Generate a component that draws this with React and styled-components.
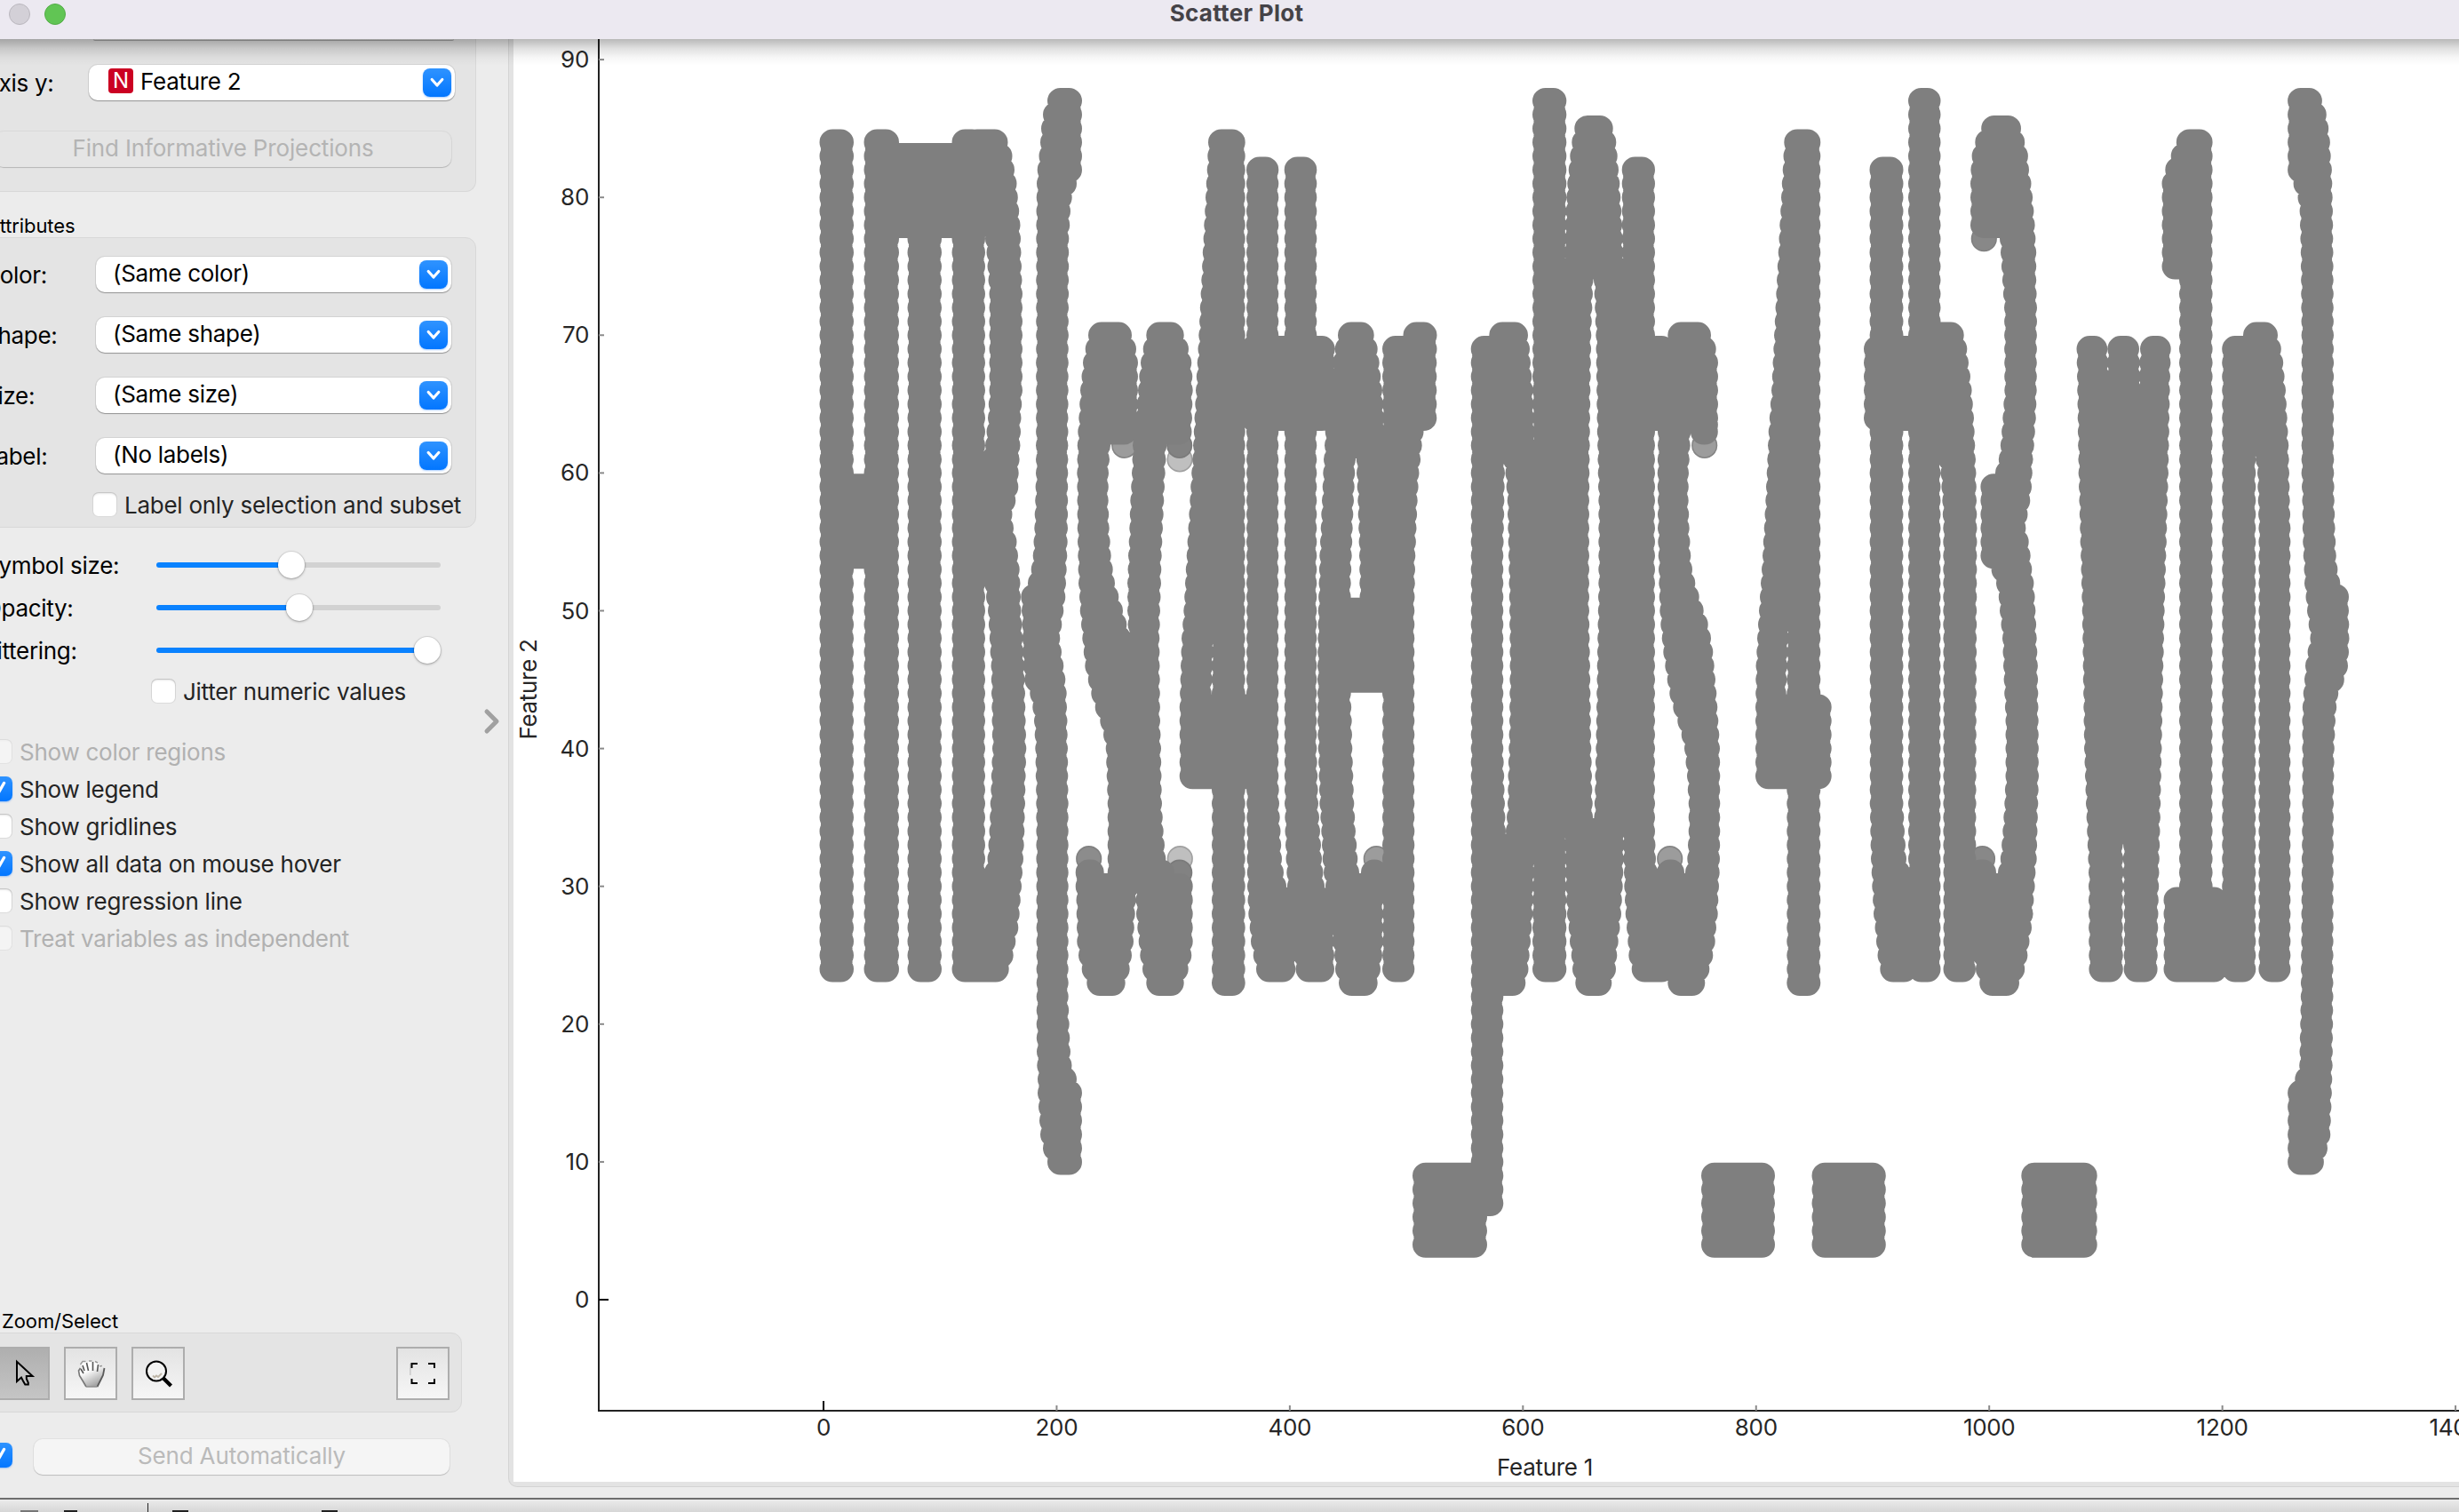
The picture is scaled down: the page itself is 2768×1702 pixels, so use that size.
import React from "react";
import styled, { createGlobalStyle, css } from "styled-components";

const GlobalStyle = createGlobalStyle`
  * { box-sizing: border-box; }
  html, body { margin: 0; padding: 0; overflow: hidden; }
  body { background: #ececec; }
`;

const Window = styled.div`
  width: 2768px;
  height: 1702px;
  display: flex;
  flex-direction: column;
  overflow: hidden;
  background: #ececec;
  font-family: Inter, "Liberation Sans", sans-serif;
  font-size: 26px;
  line-height: 32px;
  letter-spacing: -0.3px;
  color: #000;
  white-space: nowrap;
`;

const TitleBar = styled.header`
  position: relative;
  z-index: 2;
  flex: none;
  height: 44px;
  padding: 0 0 12px 10px;
  display: grid;
  grid-template-columns: 80px 1fr 74px;
  align-items: center;
  background: #ece9f1;
  &::after {
    content: "";
    position: absolute;
    left: 0;
    right: 0;
    top: 44px;
    height: 30px;
    background: linear-gradient(rgba(0, 0, 0, 0.28), rgba(0, 0, 0, 0.12) 35%, rgba(0, 0, 0, 0.03) 70%, rgba(0, 0, 0, 0));
    pointer-events: none;
  }
`;

const Lights = styled.div`
  display: flex;
  gap: 16px;
`;

const Light = styled.span`
  width: 24px;
  height: 24px;
  border-radius: 50%;
  background: ${(p) => p.$fill};
  border: 1px solid ${(p) => p.$edge};
`;

const Title = styled.h1`
  margin: -2px 0 0;
  font-size: 26px;
  font-weight: 700;
  letter-spacing: 0.3px;
  text-align: center;
  color: #454348;
`;

const Body = styled.main`
  flex: none;
  height: 1642px;
  display: flex;
`;

const Sidebar = styled.aside`
  width: 536px;
  flex: none;
  padding-bottom: 26px;
  display: flex;
  flex-direction: column;
`;

const Group = styled.section`
  width: ${(p) => p.$width}px;
  height: ${(p) => p.$height}px;
  flex: none;
  margin-left: -40px;
  padding: ${(p) => p.$pad};
  display: flex;
  flex-direction: column;
  gap: ${(p) => p.$gap || 0}px;
  background: #e4e4e4;
  border: 1px solid #d8d8d8;
  border-radius: ${(p) => (p.$openTop ? "0 0 12px 12px" : "12px")};
  ${(p) => p.$openTop && css`border-top: 0;`}
`;

const Heading = styled.h2`
  margin: ${(p) => p.$margin};
  padding-top: 1px;
  height: 28px;
  font-size: 22px;
  line-height: 28px;
  font-weight: 400;
  letter-spacing: -0.1px;
`;

const Row = styled.div`
  display: flex;
  align-items: center;
  height: 40px;
  flex: none;
  margin-top: ${(p) => p.$top || 0}px;
`;

const Label = styled.span`
  width: ${(p) => p.$width}px;
  flex: none;
  padding-top: 1px;
`;

const Combo = styled.div`
  width: ${(p) => p.$width}px;
  height: 40px;
  flex: none;
  display: flex;
  align-items: center;
  padding: 0 4px 0 ${(p) => p.$indent}px;
  background: #fff;
  border-radius: 10px;
  box-shadow: 0 0 0 1px rgba(0, 0, 0, 0.07), 0 1px 1px rgba(0, 0, 0, 0.3);
`;

const ComboText = styled.span`
  flex: 1;
  margin-top: -2px;
`;

const ComboArrow = styled.span`
  width: 32px;
  height: 32px;
  display: grid;
  place-items: center;
  border-radius: 8px;
  background: linear-gradient(#2f93ff, #0276ff);
  box-shadow: 0 1px 2px rgba(0, 110, 255, 0.35);
`;

const ComboPeek = styled.div`
  width: 406px;
  height: 2px;
  margin-left: 124px;
  flex: none;
  background: #dcdcdc;
  border-bottom: 1px solid #a8a8a8;
  border-radius: 0 0 8px 8px;
`;

const NumericBadge = styled.span`
  width: 28px;
  height: 28px;
  margin: -5px 8px 0 0;
  border-radius: 4px;
  background: #cb0022;
  color: #fff;
  font-size: 24px;
  line-height: 28px;
  letter-spacing: 0;
  text-align: center;
`;

const PushButton = styled.button`
  width: ${(p) => p.$width}px;
  height: 40px;
  flex: none;
  margin: ${(p) => p.$margin || 0};
  padding: 0 0 2px;
  border: 0;
  border-radius: 10px;
  font: inherit;
  letter-spacing: -0.15px;
  color: ${(p) => p.$color};
  background: ${(p) => p.$bg};
  box-shadow: 0 0 0 1px rgba(0, 0, 0, 0.045), 0 1px 1px rgba(0, 0, 0, 0.16);
`;

const Check = styled.label`
  height: ${(p) => p.$height || 28}px;
  flex: none;
  display: flex;
  align-items: center;
  gap: 8px;
  margin: ${(p) => p.$margin || 0};
  color: ${(p) => (p.$disabled ? "#b1b1b1" : "#242424")};
  letter-spacing: -0.26px;
`;

const CheckText = styled.span`
  padding-top: 2px;
`;

const Box = styled.span`
  width: 28px;
  height: 28px;
  flex: none;
  display: grid;
  place-items: center;
  border-radius: 7px;
  background: ${(p) => (p.$checked ? "linear-gradient(#2f93ff, #0276ff)" : p.$disabled ? "#f4f4f4" : "#fff")};
  box-shadow: ${(p) =>
    p.$checked
      ? "0 1px 2px rgba(0, 110, 255, 0.35)"
      : `inset 0 0 0 1px rgba(0, 0, 0, ${p.$disabled ? 0.07 : 0.14}), inset 0 2px 2px rgba(0, 0, 0, ${p.$disabled ? 0.03 : 0.1})`};
`;

const Sliders = styled.div`
  margin: 18px 0 8px -18px;
`;

const SliderRow = styled.div`
  height: 48px;
  display: flex;
  align-items: center;
`;

const Track = styled.div`
  width: 320px;
  height: 6px;
  display: flex;
  align-items: center;
  border-radius: 3px;
  background: linear-gradient(to right, #0a82ff ${(p) => p.$value}px, #d2d2d2 ${(p) => p.$value}px);
`;

const Thumb = styled.span`
  width: 30px;
  height: 30px;
  flex: none;
  margin-left: ${(p) => p.$value - 15}px;
  border-radius: 50%;
  background: #fff;
  box-shadow: 0 0 0 1px rgba(0, 0, 0, 0.07), 0 1px 3px rgba(0, 0, 0, 0.3);
`;

const Options = styled.div`
  display: flex;
  flex-direction: column;
  margin: 33px 0 auto -14px;
`;

const Tools = styled.div`
  display: flex;
  gap: 16px;
`;

const ToolButton = styled.button`
  width: 60px;
  height: 60px;
  padding: 0;
  display: grid;
  place-items: center;
  border: 2px solid #adadad;
  background: ${(p) => (p.$active ? "linear-gradient(#afafaf, #c5c5c5)" : "linear-gradient(#e3e3e3, #f6f6f6)")};
  ${(p) => p.$last && css`margin-left: auto;`}
`;

const Handle = styled.div`
  width: 36px;
  flex: none;
  padding: 753px 0 0 7px;
`;

const PlotFrame = styled.section`
  flex: 1;
  height: 1630px;
  padding: 0 0 5px 5px;
  background: #e3e3e3;
  border: 1px solid #d4d4d4;
  border-width: 0 0 1px 1px;
  border-bottom-left-radius: 10px;
`;

const Plot = styled.svg`
  display: block;
  background: #fff;
`;

const AxisText = styled.text`
  font-size: 26px;
  letter-spacing: -0.3px;
  fill: #262626;
  text-anchor: ${(p) => p.$anchor || "middle"};
`;

const StatusBar = styled.footer`
  flex: 1;
  display: flex;
  align-items: flex-end;
  border-top: 2px solid #6e6e6e;
  background: linear-gradient(#ebebeb, #d6d6d6);
`;

const Mark = styled.span`
  width: ${(p) => p.$width}px;
  height: ${(p) => p.$height || 2}px;
  margin-left: ${(p) => p.$gap}px;
  background: ${(p) => p.$color || "#222"};
`;

/* Scatter data: every stroke is a list of [row, left, right] stops.
   Rows between two stops are interpolated. */
const ROW = 15.51;
const rowY = (row) => 1463 - row * ROW;
const R = 14.7;

const bar = (top, bottom, left, right) => [[top, left, right], [bottom, left, right]];

const STROKES = [
  // H
  bar(84, 24, 922.5, 961), bar(84, 24, 972.5, 1012), bar(59, 54, 936, 1000),
  // T
  bar(83, 78, 990, 1090), bar(80, 24, 1021.5, 1060),
  // B
  bar(84, 24, 1071.5, 1109),
  [[84, 1085, 1134.5], [83, 1085, 1139.5], [82, 1085, 1142], [81, 1085, 1144.5], [80, 1085, 1145.8], [78, 1100, 1148.5], [77, 1109, 1149], [76, 1110.5, 1149.5], [73, 1113.5, 1151], [66, 1113.5, 1151], [64, 1112, 1149.5], [62, 1109, 1148.5], [60, 1100, 1146.7], [59, 1090, 1146.3], [58, 1090, 1143.3], [57, 1090, 1139.5], [56, 1090, 1141], [55, 1090, 1144.5], [54, 1090, 1146], [53, 1100, 1147.7], [52, 1108, 1148.5], [50, 1112, 1149.5], [46, 1115.5, 1153.3], [40, 1117, 1155.3], [34, 1113.5, 1153.3], [32, 1111.5, 1152], [31, 1108, 1151], [30, 1100, 1150], [28, 1100, 1147.7], [27, 1100, 1146.3], [26, 1100, 1143.3], [25, 1100, 1140.7], [24, 1085, 1135.7]],
  // {
  [[87, 1179, 1218], [86, 1174, 1218], [85, 1172, 1218], [84, 1171, 1218], [83, 1169.5, 1218], [82, 1167.7, 1218], [81, 1167, 1212], [80, 1166.7, 1206.7], [79, 1166.5, 1205], [77, 1166.3, 1203.3], [60, 1166, 1202.3], [56, 1164.3, 1202], [54, 1162.7, 1201.3], [53, 1160.7, 1200.7], [52, 1157, 1200], [51, 1149.3, 1199.3], [50, 1150, 1197.3], [49, 1150.5, 1195.3], [48, 1150.7, 1193.3], [47, 1151, 1195], [46, 1151.7, 1197.3], [45, 1153.3, 1199.3], [44, 1159.3, 1200.7], [43, 1162.3, 1201], [42, 1164, 1201.5], [40, 1165.3, 1202], [36, 1166.3, 1202.7], [22, 1166.7, 1202.7], [20, 1166.7, 1203.7], [18, 1167, 1205], [17, 1167.3, 1206.5], [16, 1168, 1212], [15, 1168, 1218], [12, 1171, 1218], [11, 1174, 1218], [10, 1179, 1218]],
  // s
  [[70, 1225, 1274], [69, 1221.7, 1279], [68, 1219, 1281], [66, 1216, 1281], [64, 1214.3, 1281], [63, 1213.3, 1280]],
  [[63, 1213.3, 1250], [62, 1212.7, 1250], [61, 1212.5, 1249], [60, 1212.3, 1248], [58, 1212.5, 1247.7], [56, 1212.7, 1248.7], [54, 1213.3, 1250.7], [53, 1213.6, 1252.7], [52, 1214, 1255], [51, 1215, 1259.3], [50, 1215.7, 1264], [49, 1217, 1268.3], [48, 1218.3, 1273], [46, 1221.3, 1278], [44, 1228.3, 1281], [43, 1232.7, 1281.7], [42, 1238.3, 1282], [41, 1242, 1282], [40, 1244.7, 1282], [36, 1246.7, 1282], [30, 1246.7, 1282]],
  bar(31, 30, 1210.7, 1242.7),
  [[30, 1211.3, 1280], [28, 1211.7, 1277.7], [26, 1212.3, 1276], [25, 1214, 1274], [24, 1217.7, 1271.7], [23, 1223.3, 1266.7]],
  // s
  [[70, 1290.3, 1332.7], [69, 1286.7, 1338], [68, 1284, 1341.3], [67, 1282.3, 1342.3], [66, 1281, 1342.7], [64, 1278, 1342], [63, 1276, 1341.5]],
  [[63, 1276, 1314], [62, 1275, 1313.3], [60, 1274, 1311.7], [58, 1272.3, 1310.3], [56, 1271.3, 1309], [54, 1270, 1307.7], [52, 1269, 1307], [50, 1269, 1306], [48, 1270, 1305.3], [42, 1270, 1306], [40, 1272, 1307], [36, 1275, 1308], [34, 1276, 1309.7], [32, 1277, 1312.3], [31, 1278, 1322], [30, 1278, 1322]],
  [[30, 1278, 1342.7], [28, 1279, 1342.7], [26, 1281.7, 1342.7], [25, 1283.3, 1341.3], [24, 1286, 1337.7], [23, 1290.3, 1332.7]],
  // 4
  bar(84, 23, 1364, 1401.7),
  [[84, 1360, 1401.7], [82, 1358.7, 1400], [78, 1355.3, 1400], [74, 1352.3, 1400], [70, 1349.3, 1400], [66, 1346, 1400], [62, 1343, 1395], [58, 1339.3, 1385], [54, 1335.7, 1374], [50, 1332.3, 1369], [48, 1330, 1367], [46, 1329, 1365.5], [43, 1327.7, 1363]],
  bar(43, 38, 1327.7, 1425),
  // t
  [[82, 1403, 1439.3], [38, 1403, 1439.3], [36, 1403.2, 1440], [34, 1403.4, 1441.5], [32, 1403.6, 1443], [31, 1403.8, 1445], [30, 1404, 1448], [29, 1404.5, 1460], [28, 1405.3, 1460], [27, 1406.7, 1460], [26, 1408, 1460], [25, 1410.7, 1459], [24, 1414, 1458.3]],
  bar(69, 64, 1396, 1502.7),
  // t
  [[82, 1445.7, 1482.3], [40, 1445.7, 1482.3], [36, 1446, 1484], [34, 1446.5, 1486], [32, 1447.5, 1488], [30, 1449, 1491], [29, 1449, 1501], [25, 1456, 1502], [24, 1458.5, 1502]],
  // e
  [[70, 1506, 1546.7], [69, 1502.7, 1550.7], [68, 1500, 1552.7], [67, 1498, 1554.3], [66, 1496, 1556], [64, 1492.3, 1558.3], [62, 1491, 1560]],
  [[62, 1491, 1528], [61, 1490, 1526], [60, 1489.3, 1525.3], [58, 1488, 1524], [56, 1486.7, 1522.7], [54, 1485.3, 1521.7], [52, 1484.5, 1520.7], [50, 1483.7, 1520.5], [46, 1483, 1520.5], [44, 1483, 1520.7], [42, 1483, 1521.7], [40, 1483.7, 1522.3], [38, 1484.5, 1523.3], [36, 1485.3, 1524.3], [34, 1487.3, 1526], [32, 1488.7, 1528.3], [31, 1490, 1530], [30, 1492, 1532]],
  bar(31, 30, 1532, 1562),
  [[30, 1492, 1558], [29, 1493, 1557], [26, 1500, 1557], [25, 1502, 1556], [24, 1503, 1554], [23, 1507, 1550.7]],
  [[62, 1526.5, 1575], [60, 1527, 1575], [58, 1528.3, 1575], [54, 1530, 1575], [50, 1530.7, 1575]],
  bar(50, 45, 1500, 1575),
  // r
  bar(70, 69, 1579.5, 1617.5), bar(69, 64, 1556, 1617.3),
  [[64, 1556, 1603], [63, 1556, 1602.5], [62, 1556, 1600.7], [60, 1556, 1597.5], [58, 1556, 1595.7], [56, 1556, 1594.5], [54, 1556, 1593.3], [50, 1556, 1592.3], [24, 1556, 1592.3]],
  // underscores
  bar(9, 4, 1590, 1674), bar(9, 4, 1915, 1998), bar(9, 4, 2039.5, 2122.8), bar(9, 4, 2275.3, 2360.7),
  // p
  [[69, 1655.7, 1692.3], [60, 1655.7, 1694], [54, 1655.7, 1692.3], [40, 1655.7, 1692.3], [36, 1655.7, 1694], [34, 1655.7, 1695], [24, 1655.7, 1692.3], [7, 1655.7, 1692.3]],
  [[70, 1676.3, 1720], [69, 1670, 1722], [68, 1670, 1723], [67, 1670, 1724.3], [66, 1670, 1725.7], [64, 1670, 1727], [62, 1685, 1728], [61, 1692, 1730], [60, 1694.5, 1730], [58, 1696.7, 1730], [54, 1698, 1730], [50, 1699, 1730], [46, 1699.5, 1730], [42, 1699, 1730], [38, 1697.5, 1730], [36, 1697, 1730], [34, 1695, 1730], [33, 1688, 1730], [32, 1680, 1728], [30, 1680, 1726.7], [28, 1680, 1725.3], [27, 1680, 1724.3], [26, 1680, 1723], [25, 1680, 1721.7], [24, 1680, 1720.5], [23, 1680, 1717.3]],
  // l
  bar(87, 24, 1725, 1763.3),
  // 0
  [[85, 1772.3, 1815.7], [84, 1769.3, 1819.3], [83, 1767.3, 1820.7], [82, 1765.7, 1822], [81, 1764.3, 1823.3], [80, 1763.3, 1824.3], [78, 1761.7, 1826], [76, 1760.7, 1827.3], [75, 1760, 1828]],
  [[75, 1759, 1794], [74, 1758, 1793.5], [70, 1756, 1791.3], [64, 1755, 1790], [58, 1755, 1789], [50, 1755, 1789], [46, 1755, 1790], [40, 1756, 1791.3], [34, 1760, 1793.5]],
  [[75, 1794, 1830], [74, 1794, 1830], [70, 1796.3, 1832], [64, 1797.5, 1832], [58, 1799.3, 1832], [52, 1799.3, 1832], [46, 1797.7, 1832], [40, 1796.3, 1830], [34, 1794, 1829]],
  [[34, 1760, 1829], [31, 1761.7, 1827.3], [30, 1762, 1826.7], [28, 1764, 1825], [27, 1765.7, 1823.5], [26, 1767, 1821.7], [25, 1768.7, 1820.3], [24, 1770, 1819], [23, 1773.3, 1814.3]],
  // t
  [[82, 1825.7, 1863], [34, 1826, 1863], [32, 1827.3, 1864], [31, 1828, 1866], [30, 1828.3, 1880], [28, 1829.7, 1885], [27, 1831, 1885], [26, 1832.3, 1885], [25, 1833.3, 1885], [24, 1836.7, 1885]],
  bar(69, 64, 1850, 1885),
  // s
  [[70, 1877.3, 1926], [69, 1872, 1931.7], [68, 1870, 1934], [64, 1870, 1934]],
  bar(64, 63, 1903, 1933.8),
  [[64, 1867, 1904], [63, 1866, 1903.3], [62, 1866, 1902.7], [60, 1865.7, 1901], [58, 1866, 1900.7], [56, 1866, 1901.7], [54, 1866.7, 1903.3], [53, 1867, 1905], [52, 1867.3, 1908.3], [51, 1867.7, 1912.7], [50, 1868.3, 1917.7], [49, 1869.3, 1922.7], [48, 1870.7, 1926], [47, 1872.3, 1928.3], [46, 1874.3, 1929.7], [45, 1876.7, 1931], [44, 1879.3, 1932.3], [43, 1883.3, 1933.3], [42, 1888.3, 1934.3], [41, 1892.7, 1935.3], [40, 1896, 1936], [38, 1899, 1936.3], [36, 1900.7, 1936.3], [34, 1900.7, 1936.3], [32, 1899.3, 1936], [31, 1897, 1935.7], [30, 1890, 1935]],
  bar(31, 30, 1865, 1896),
  [[30, 1880, 1935], [28, 1870, 1933.7], [27, 1870, 1932], [26, 1870, 1930.7], [25, 1870, 1928.3], [24, 1870, 1924.3], [23, 1877.3, 1919.3]],
  // 4
  bar(84, 23, 2011.3, 2049.3),
  [[84, 2008.3, 2045], [82, 2006.7, 2045], [78, 2003.3, 2045], [74, 2000, 2045], [70, 1997, 2040], [66, 1994, 2035], [63, 1990.7, 2030], [58, 1987.3, 2024], [54, 1984, 2020], [51, 1981, 2017], [48, 1978, 2013.5], [46, 1976.5, 2012], [43, 1976, 2010]],
  bar(43, 38, 1976, 2061.7),
  // t
  [[82, 2104.5, 2142.5], [36, 2104.7, 2142.5], [34, 2105.3, 2144], [32, 2106, 2146], [31, 2106.7, 2150], [30, 2107.3, 2160], [28, 2109, 2160], [27, 2110.5, 2160], [26, 2112, 2160], [25, 2113.5, 2160], [24, 2116.3, 2158]],
  bar(69, 64, 2098, 2180),
  // h
  bar(87, 24, 2148, 2184.5),
  [[70, 2160, 2210.7], [69, 2160, 2214.3], [68, 2160, 2216], [67, 2160, 2218], [66, 2160, 2219.6], [64, 2160, 2222], [62, 2175, 2223.3], [61, 2182, 2224], [60, 2184.5, 2224.5], [58, 2186.3, 2225], [56, 2187.3, 2225.5], [24, 2187.5, 2224]],
  // 3
  [[85, 2230.2, 2275], [84, 2223.3, 2279.2], [83, 2219.6, 2282.9], [82, 2218.4, 2284], [81, 2218, 2286.5], [80, 2218, 2288.2], [78, 2218, 2290.6]],
  [[78, 2250, 2290.6], [77, 2251, 2291.4], [76, 2252, 2292.2], [74, 2253.9, 2292.2], [72, 2256, 2293], [66, 2256.3, 2292.7], [64, 2254.3, 2291.8], [62, 2251.8, 2289.8], [61, 2249.8, 2288.6], [60, 2246, 2287.8], [59, 2229.4, 2287], [58, 2229.4, 2285.3], [57, 2229.4, 2282.5], [56, 2229.4, 2280.4], [55, 2229.4, 2283.7], [54, 2229.4, 2285.7], [53, 2241.6, 2287.3], [52, 2247, 2289.4], [51, 2249.8, 2290.6], [50, 2251, 2291.4], [48, 2254, 2292.7], [46, 2255, 2293.9], [42, 2257.5, 2294.7], [38, 2257.5, 2295], [36, 2256.3, 2294.3], [34, 2254.3, 2293.5], [32, 2251.8, 2292.7], [31, 2249, 2291.4], [30, 2245, 2290.6]],
  bar(31, 30, 2215, 2247),
  [[30, 2220, 2290.6], [29, 2220, 2289.4], [28, 2220, 2288.6], [27, 2220, 2287], [26, 2220, 2284.5], [25, 2221, 2282.4], [24, 2224, 2279.2], [23, 2228.2, 2273]],
  // w
  [[69, 2337.5, 2372.2], [67, 2338, 2374.5], [60, 2339.6, 2380], [50, 2343.7, 2385], [40, 2346, 2387], [36, 2348, 2388], [31, 2351, 2390.5], [28, 2351, 2389.8], [24, 2351.4, 2389.8]],
  [[69, 2372.3, 2408], [67, 2371.5, 2409.5], [60, 2366, 2412], [40, 2366, 2412], [34, 2372, 2405]],
  [[69, 2409, 2443.7], [67, 2407.5, 2443], [60, 2400, 2441], [50, 2396, 2436.7], [45, 2394, 2435], [40, 2392, 2433.5], [36, 2391, 2432.2], [31, 2389.5, 2430.5], [28, 2390.6, 2429.5], [24, 2390.6, 2428.6]],
  // 1
  bar(84, 24, 2453, 2490.6),
  [[84, 2449.8, 2490.6], [83, 2443.7, 2490], [82, 2437.3, 2490], [81, 2433.5, 2490], [75, 2433.5, 2480]],
  bar(29, 24, 2435.5, 2507),
  // n
  bar(69, 24, 2501.2, 2539.3),
  [[70, 2525, 2564], [69, 2525, 2567.8], [68, 2525, 2570.2], [66, 2525, 2573], [64, 2525, 2574.7], [62, 2532, 2576.3], [61, 2539, 2576.7], [60, 2541, 2577], [56, 2542.4, 2578.4], [24, 2542.4, 2578.4]],
  // }
  [[87, 2575.1, 2613.9], [86, 2575.1, 2618.8], [85, 2575.1, 2621.2], [84, 2575.1, 2622.9], [83, 2575.1, 2623.7], [82, 2575.1, 2624.9], [81, 2581.6, 2625.3], [80, 2586.5, 2625.7], [79, 2588.6, 2626], [76, 2589.8, 2626.5], [70, 2590.6, 2627], [60, 2590.6, 2627.3], [58, 2591.4, 2627.8], [56, 2591.8, 2628.6], [54, 2592.7, 2629.8], [53, 2593.5, 2631.4], [52, 2594, 2634.3], [51, 2595.5, 2644], [50, 2597, 2644], [48, 2600.4, 2644.5], [47, 2597.6, 2644], [46, 2595, 2643], [45, 2594, 2638.8], [44, 2592.7, 2632.2], [43, 2591.8, 2630.2], [42, 2591.4, 2629], [40, 2591.4, 2627.8], [36, 2591.4, 2627], [22, 2589.8, 2626.5], [17, 2588.2, 2625.7], [16, 2583.3, 2625.3], [15, 2575.1, 2624.9], [12, 2575.1, 2623.3], [11, 2575.1, 2620], [10, 2575.1, 2615.9]],
];

/* Dense rows overlap so much that the notch between two of them is shallow. */
const NOTCH = 1.4;

const segment = (left, right, y) =>
  `M${left.toFixed(1)} ${y.toFixed(1)}H${Math.max(right, left + 0.1).toFixed(1)}`;

const strokePath = (stops) => {
  let d = "";
  let i = 0;
  let last = null;
  for (let row = stops[0][0]; row >= stops[stops.length - 1][0]; row--) {
    while (i < stops.length - 2 && row < stops[i + 1][0]) i++;
    const [r0, l0, e0] = stops[i];
    const [r1, l1, e1] = stops[i + 1];
    const t = r0 === r1 ? 0 : (r0 - row) / (r0 - r1);
    const left = l0 + (l1 - l0) * t + R;
    const right = e0 + (e1 - e0) * t - R;
    d += segment(left, right, rowY(row));
    if (last) d += segment(Math.max(left, last[0]) + NOTCH, Math.min(right, last[1]) - NOTCH, rowY(row + 0.5));
    last = [left, right];
  }
  return d;
};

const CLOUD = STROKES.map(strokePath).join("");

/* Points sparse enough for their translucent fill to show: x, row, fill, edge. */
const LOOSE_POINTS = [
  [1265.7, 62, "#9c9c9c", "#848484"],
  [1328, 61, "#bfbfbf", "#a0a0a0"],
  [1327.7, 62, "#828282", "#7a7a7a"],
  [1225.7, 32, "#8c8c8c", "#808080"],
  [1328.3, 32, "#bfbfbf", "#a0a0a0"],
  [1327.7, 31, "#828282", "#7a7a7a"],
  [1549.3, 32, "#9c9c9c", "#848484"],
  [1918.7, 62, "#9c9c9c", "#848484"],
  [1879.7, 32, "#9c9c9c", "#848484"],
  [2233.3, 77, "#888", "#808080"],
  [2231.5, 32, "#888", "#808080"],
];

const Y_TICKS = [0, 10, 20, 30, 40, 50, 60, 70, 80, 90];
const X_TICKS = [0, 200, 400, 600, 800, 1000, 1200, 1400];
const valueX = (v) => 927 + v * 1.3122;

function ScatterPlot() {
  return (
    <Plot width="2190" height="1624" viewBox="578 44 2190 1624">
      {LOOSE_POINTS.map(([x, row, fill, edge]) => (
        <circle key={`${x}-${row}`} cx={x} cy={rowY(row)} r="13.8" fill={fill} stroke={edge} strokeWidth="1.6" />
      ))}
      <path d={CLOUD} stroke="#7f7f7f" strokeWidth={R * 2} strokeLinecap="round" fill="none" />
      <path d="M674 44V1588H2768" stroke="#222" strokeWidth="2" fill="none" />
      {Y_TICKS.map((v) => (
        <g key={v}>
          <path d={`M674 ${rowY(v)}H${v ? 680 : 685}`} stroke={v ? "#8a8a8a" : "#000"} strokeWidth="2" />
          <AxisText x="663" y={rowY(v) + 9} $anchor="end">{v}</AxisText>
        </g>
      ))}
      {X_TICKS.map((v) => (
        <g key={v}>
          <path d={`M${valueX(v)} 1588V${v ? 1582 : 1577}`} stroke={v ? "#8a8a8a" : "#000"} strokeWidth="2" />
          <AxisText x={valueX(v)} y="1616">{v}</AxisText>
        </g>
      ))}
      <AxisText x="1739" y="1661">Feature 1</AxisText>
      <AxisText transform="translate(604 776) rotate(-90)">Feature 2</AxisText>
    </Plot>
  );
}

function Select({ width, text, indent = 19, badge }) {
  return (
    <Combo $width={width} $indent={indent}>
      {badge && <NumericBadge>{badge}</NumericBadge>}
      <ComboText>{text}</ComboText>
      <ComboArrow>
        <svg width="18" height="14" viewBox="0 0 18 14">
          <path d="M3.2 3.5L9 10L14.8 3.5" fill="none" stroke="#fff" strokeWidth="3.2" strokeLinecap="round" strokeLinejoin="round" />
        </svg>
      </ComboArrow>
    </Combo>
  );
}

function CheckBox({ label, checked, disabled, height, margin }) {
  return (
    <Check $disabled={disabled} $height={height} $margin={margin}>
      <Box $checked={checked} $disabled={disabled}>
        {checked && (
          <svg width="20" height="20" viewBox="0 0 20 20">
            <path d="M2.5 11L7 16.5L14.5 3.5" fill="none" stroke="#fff" strokeWidth="3.4" strokeLinecap="round" strokeLinejoin="round" />
          </svg>
        )}
      </Box>
      {label && <CheckText>{label}</CheckText>}
    </Check>
  );
}

function Slider({ label, value }) {
  return (
    <SliderRow>
      <Label $width={194}>{label}</Label>
      <Track $value={value}>
        <Thumb $value={value} />
      </Track>
    </SliderRow>
  );
}

const ATTRIBUTES = [
  ["Color:", "(Same color)"],
  ["Shape:", "(Same shape)"],
  ["Size:", "(Same size)"],
  ["Label:", "(No labels)"],
];

const OPTIONS = [
  { label: "Show color regions", disabled: true },
  { label: "Show legend", checked: true },
  { label: "Show gridlines" },
  { label: "Show all data on mouse hover", checked: true },
  { label: "Show regression line" },
  { label: "Treat variables as independent", disabled: true },
];

const ArrowIcon = () => (
  <svg width="32" height="32" viewBox="0 0 32 32">
    <path d="M9 2.8V25L14 20.5L16 24.5L18.3 28.6H21.8V26.5L19.8 22V19H26.6L9 2.8Z" fill="#c4c4c4" stroke="#000" strokeWidth="2" />
  </svg>
);

const HandIcon = () => (
  <svg width="34" height="34" viewBox="0 0 34 34">
    <defs>
      <linearGradient id="palm" x1="0" y1="0" x2="0.5" y2="1">
        <stop offset="0.45" stopColor="#fdfdfd" />
        <stop offset="1" stopColor="#a6a6a6" />
      </linearGradient>
    </defs>
    <path d="M12 32L8.5 26L4.5 19.5L3.5 14L5.5 11L8.5 12.5L5.5 6.5L8 3.5H11.5L13 5L15 3H18.5L20 4.5L22 3.5L25 5L27 9L30 8.5L32.5 11L31 19L28 25L24.5 32Z" fill="url(#palm)" />
    <path d="M12 32L8.5 26L4.5 19.5L3.5 14L5.5 11" fill="none" stroke="#777" strokeWidth="1.6" />
    <path d="M5.5 7L8 3.5H11.5M15 3H18.5M22 3.5L25 5M27 9L30 8.5" fill="none" stroke="#999" strokeWidth="1.4" />
    <path d="M32.5 11L31 19L28 25L24.5 32" fill="none" stroke="#5a5a5a" strokeWidth="1.8" />
    <path d="M12.5 5L14.5 14M19.5 4V14M25.5 7L24.5 15M6 12L9 17M8 8L10 14" fill="none" stroke="#555" strokeWidth="1.6" />
    <path d="M12 32H24.5" stroke="#8c8c8c" strokeWidth="1.4" />
  </svg>
);

const ZoomIcon = () => (
  <svg width="34" height="34" viewBox="0 0 34 34">
    <circle cx="15" cy="14.5" r="11" fill="#f3f3f2" stroke="#000" strokeWidth="2" />
    <path d="M11 19.5L13 21.5L15 19.5L17 21L21 17" fill="none" stroke="#bdb5a6" strokeWidth="1.8" />
    <path d="M23 22.5L31.5 31" stroke="#000" strokeWidth="4.2" />
  </svg>
);

const FitIcon = () => (
  <svg width="32" height="28" viewBox="0 0 32 28">
    <path d="M1.8 3V16" stroke="#ccc" strokeWidth="1.6" />
    <path d="M3.5 8V3H10M22 3H29V8M29 20V25H22M10 25H3.5V20" fill="none" stroke="#000" strokeWidth="2" />
  </svg>
);

export default function App() {
  return (
    <Window>
      <GlobalStyle />
      <TitleBar>
        <Lights>
          <Light $fill="#d3d0d7" $edge="#bab7be" />
          <Light $fill="#61c554" $edge="#53ad47" />
        </Lights>
        <Title>Scatter Plot</Title>
      </TitleBar>
      <Body>
        <Sidebar>
          <Group $openTop $width={576} $height={172} $pad="0 0 0 20px">
            <ComboPeek />
            <Row $top={27}>
              <Label $width={119}>Axis y:</Label>
              <Select width={412} indent={22} badge="N" text="Feature 2" />
            </Row>
            <PushButton $width={514} $margin="35px 0 0 13px" $color="#b4b4b4" $bg="#e5e5e5">
              Find Informative Projections
            </PushButton>
          </Group>

          <Heading $margin="23px 0 0 -15px">Attributes</Heading>
          <Group $width={576} $height={327} $pad="21px 0 0 20px" $gap={28}>
            {ATTRIBUTES.map(([label, text]) => (
              <Row key={label}>
                <Label $width={127}>{label}</Label>
                <Select width={400} text={text} />
              </Row>
            ))}
            <CheckBox label="Label only selection and subset" margin="-7px 0 0 123px" />
          </Group>

          <Sliders>
            <Slider label="Symbol size:" value={152} />
            <Slider label="Opacity:" value={161} />
            <Slider label="Jittering:" value={305} />
          </Sliders>
          <CheckBox label="Jitter numeric values" margin="0 0 0 170px" />

          <Options>
            {OPTIONS.map((option) => (
              <CheckBox key={option.label} height={42} {...option} />
            ))}
          </Options>

          <Heading $margin="0 0 0 2px">Zoom/Select</Heading>
          <Group $width={560} $height={90} $pad="15px 13px 0 35px">
            <Tools>
              <ToolButton $active><ArrowIcon /></ToolButton>
              <ToolButton><HandIcon /></ToolButton>
              <ToolButton><ZoomIcon /></ToolButton>
              <ToolButton $last><FitIcon /></ToolButton>
            </Tools>
          </Group>
          <Row $top={30}>
            <CheckBox checked margin="-4px 24px 0 -14px" />
            <PushButton $width={468} $color="#bababa" $bg="#f5f5f5">Send Automatically</PushButton>
          </Row>
        </Sidebar>
        <Handle>
          <svg width="24" height="30" viewBox="0 0 24 30">
            <path d="M5 4L16 15L5 26" fill="none" stroke="#a0a0a0" strokeWidth="5" strokeLinecap="round" strokeLinejoin="round" />
          </svg>
        </Handle>
        <PlotFrame>
          <ScatterPlot />
        </PlotFrame>
      </Body>
      <StatusBar>
        <Mark $width={20} $gap={23} $color="#777" />
        <Mark $width={15} $gap={29} />
        <Mark $width={1} $height={10} $gap={79} />
        <Mark $width={18} $gap={27} />
        <Mark $width={18} $gap={150} />
      </StatusBar>
    </Window>
  );
}
